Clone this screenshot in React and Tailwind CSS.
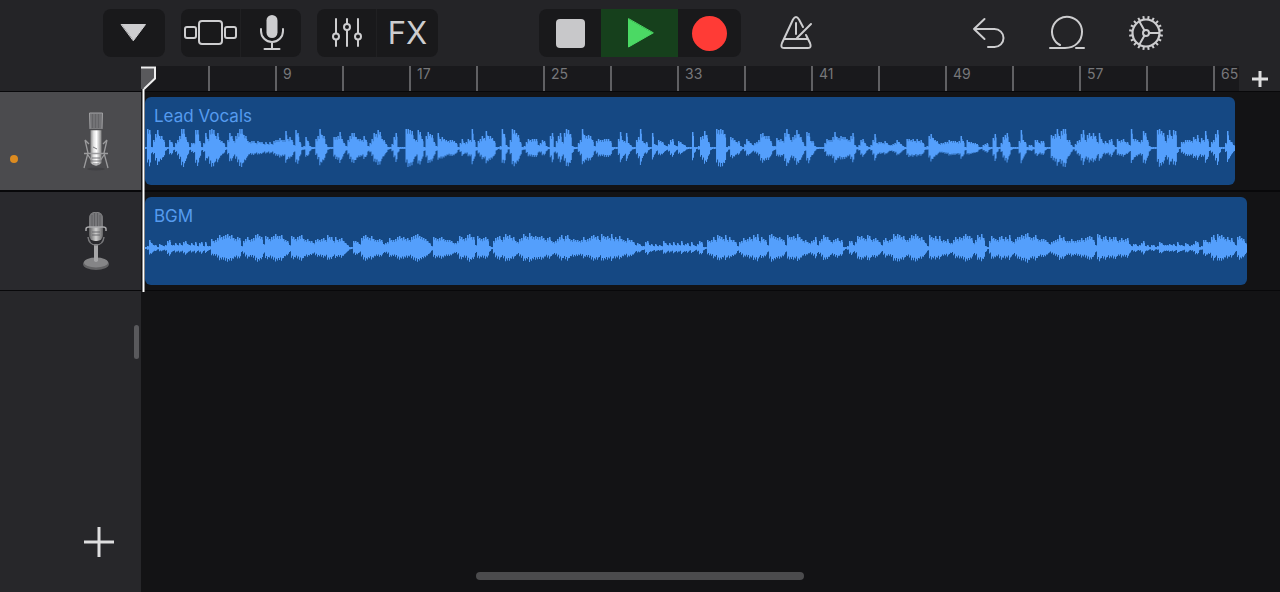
import { clsx } from "clsx";

const BAR_MARKS = ["", "", "9", "", "17", "", "25", "", "33", "", "41", "", "49", "", "57", "", "65"];

// one character per 2px of audio, base 36 amplitude
const LEAD_PEAKS = [
    "1ji18eicc81186158cjjb6155ii715f9ijicf87518fc7cfjjdc7",
    "677576646464788a88h9b83if612b7",
    "2119cjdc4111bbcg9528cffb998c82",
    "59feig984114bf1111jjih98ig91cg",
    "ed62f9b98788751595698j8179cahc",
    "ca7112je31",
    "8jifd612698999358721cf17cf6fji",
    "e21158jdcdc82798899971119g87f5",
    "3118bj75611f438763248932764311",
    "1g112bchd6111jijie12ba86721497",
    "53568efccc722a897fje8bdieb62gf",
    "77211115988bgbacbb98cf31389521",
    "38e56",
    "657533458642199897978512cea874",
    "5566877767c718665541134511ae11",
    "5bdf611117i86133188577111dcejc",
    "hjj8831478ei8dfcfc6f9575893197",
    "89663j99868hf82111ijhf7dicih11",
    "668887b9d6a8h9168ei1115h863",
].join("");

const BGM_PEAKS = [
    "12853314323783353536743536256262",
    "2978adbcdecda9ba279b89adecb4cb9bceccd9873cb9bcd9897758989a8dbb7b89a75311",
    "7764acdbac98898456a889bcab9a8bcdecba9752ba9ab98887557cb9adebb3ca9ab9217abc8becdab769aecbfcbcb",
    "bca8ab7679bd9cd9898878b89acdbc8ecbcae9b9c987a8863542267342423275353635373452632476118",
    "78b8dcb9d8b886267a89b9dbe7b983decbab983dbbcaeb9786578b379dbb8689a781127736cbca9dc89a8638a789ece",
    "dbc88adcecab852dbac9c7879558b9bacecca58dbea217ca98bc9b9d769bbdcefbabd98998646789dab7779778",
    "8a8abcb83ed9bc8b9bb78a89a424423572313312653334342633254234761288",
    "66bd8ecdb9b8a63bca95",
].join("");

const TRACKS = [
    { name: "Lead Vocals", length: 1090, peaks: LEAD_PEAKS, Icon: CondenserMic, selected: true },
    { name: "BGM", length: 1102, peaks: BGM_PEAKS, Icon: DeskMic, selected: false },
];

function wavePath(peaks) {
    return [...peaks]
        .map((c, i) => {
            const a = parseInt(c, 36);
            // the lower half runs a little behind the upper one, so the two edges differ
            const prev = parseInt(peaks[i - 1] ?? c, 36);
            const below = Math.max((a * 3 + prev) / 4, 0.5);
            const above = Math.max(a, 0.5);
            return `M${i * 2} ${20 - above}h1.5v${above * 0.25}h.5V${20 + below * 0.8}h-1V${20 + below}h-1z`;
        })
        .join("");
}

function Waveform({ peaks }) {
    return (
        <svg viewBox={`0 0 ${peaks.length * 2} 40`} preserveAspectRatio="none" className="block h-10 w-full fill-[#549ffc]" aria-hidden="true">
            <path d={wavePath(peaks)} />
        </svg>
    );
}

function CondenserMic() {
    return (
        <svg width="28" height="60" viewBox="0 0 28 60" aria-hidden="true">
            <defs>
                <linearGradient id="chrome">
                    <stop offset="0" stopColor="#8b8b8b" />
                    <stop offset=".3" stopColor="#e4e4e4" />
                    <stop offset=".55" stopColor="#fff" />
                    <stop offset="1" stopColor="#858585" />
                </linearGradient>
            </defs>
            <ellipse cx="14" cy="58" rx="9" ry="1.500" fill="#414144" />
            <path d="M7.500 2h13l-.5 16H8z" fill="#737376" stroke="#a0a0a2" />
            <path d="M10.500 3v14M13.500 3v14M16.500 3v14" stroke="#646467" />
            <path d="M8.500 18h11v34q-5.500 5-11 0z" fill="url(#chrome)" />
            <path d="M8 18.500h12" stroke="#4c4c4f" strokeWidth="1.5" />
            <path d="M3 29l3 13-4 15M25 29l-3 13 4 15M2 42.500h24M6 44l4 6M22 44l-4 6M3 29l4 4M25 29l-4 4" fill="none" stroke="#9c9c9e" strokeWidth="1.3" />
            <path d="M11 36l4 2M10 47h8M9 50h10M11 53h6" stroke="#77777a" />
        </svg>
    );
}

function DeskMic() {
    return (
        <svg width="28" height="60" viewBox="0 0 28 60" aria-hidden="true">
            <defs>
                <linearGradient id="steel">
                    <stop offset="0" stopColor="#5c5c5e" />
                    <stop offset=".5" stopColor="#cfcfcf" />
                    <stop offset="1" stopColor="#626264" />
                </linearGradient>
            </defs>
            <ellipse cx="14" cy="53" rx="13" ry="6" fill="#626264" />
            <ellipse cx="14" cy="51.500" rx="12" ry="5" fill="#858587" />
            <path d="M12 33h4v17q-2 2-4 0z" fill="#a5a5a7" />
            <path d="M6 26q1 8 8 8 7 0 8-8" fill="none" stroke="#78787b" strokeWidth="1.5" />
            <rect x="7" y="1" width="14" height="29" rx="6" fill="url(#steel)" />
            <path d="M7 16V8q0-7 7-7t7 7v8z" fill="#77777a" />
            <path d="M10 4v12M12.500 2v14M15.500 2v14M18 4v12" stroke="#606063" />
            <path d="M4 20v-2q0-2 3-2h14q3 0 3 2v2" fill="none" stroke="#a8a8aa" strokeWidth="1.5" />
            <path d="M10 21h8M10 24h8" stroke="#69696c" />
        </svg>
    );
}

function ToolButton({ label, className, children }) {
    return (
        <button aria-label={label} className={clsx("flex h-12 items-center justify-center", className)}>
            {children}
        </button>
    );
}

function Glyph({ children }) {
    return (
        <svg width="36" height="36" viewBox="0 0 36 36" fill="none" stroke="currentColor" strokeWidth="2" strokeLinecap="round" strokeLinejoin="round" aria-hidden="true">
            {children}
        </svg>
    );
}

function Gear() {
    return (
        <Glyph>
            <circle cx="18" cy="18" r="13.500" strokeWidth="2.2" />
            <circle cx="18" cy="18" r="3" />
            <path d="M21 18h10M16.500 15.400l-5-8.700M16.500 20.600l-5 8.700" />
            {Array.from({ length: 20 }).map((_, i) => (
                <path key={i} d="M18 4V1" transform={`rotate(${i * 18 + 9} 18 18)`} strokeLinecap="butt" />
            ))}
        </Glyph>
    );
}

function Toolbar() {
    return (
        <header className="grid h-[66px] shrink-0 grid-cols-[1fr_auto_1fr] items-center bg-[#242427] text-[#cdcdcf]">
            <div className="flex items-center gap-4 pl-[103px]">
                <div className="rounded-lg bg-[#19191b]">
                    <ToolButton label="Browser" className="w-[62px]">
                        <Glyph>
                            <path d="M5.500 9.500h24L17.500 25.500z" fill="currentColor" strokeWidth="1" />
                        </Glyph>
                    </ToolButton>
                </div>
                <div className="flex rounded-lg bg-[#19191b]">
                    <ToolButton label="Tracks view" className="w-[60px] border-r border-[#202022]">
                        <svg width="54" height="28" viewBox="0 0 54 28" fill="none" stroke="currentColor" strokeWidth="2" aria-hidden="true">
                            <rect x="15" y="2" width="23" height="23" rx="3" />
                            <rect x="1" y="8" width="11" height="11" rx="2" />
                            <rect x="41" y="8" width="11" height="11" rx="2" />
                        </svg>
                    </ToolButton>
                    <ToolButton label="Instrument" className="w-[60px]">
                        <Glyph>
                            <rect x="13.500" y="0" width="11" height="23" rx="5.500" fill="currentColor" stroke="none" />
                            <path d="M8 14v2a11 11 0 0 0 22 0v-2M19 27v6M11.500 34h15" />
                        </Glyph>
                    </ToolButton>
                </div>
                <div className="flex rounded-lg bg-[#19191b]">
                    <ToolButton label="Track controls" className="w-[60px] border-r border-[#202022]">
                        <Glyph>
                            <path d="M7 4v14M7 25v6M18 4v5M18 15v16M29 4v14M29 25v6" />
                            <circle cx="7" cy="21.500" r="3" />
                            <circle cx="18" cy="12" r="3" />
                            <circle cx="29" cy="21.500" r="3" />
                        </Glyph>
                    </ToolButton>
                    <ToolButton label="Effects" className="w-[61px] text-[31px]">FX</ToolButton>
                </div>
            </div>

            <div className="flex overflow-hidden rounded-lg bg-[#19191b]">
                <ToolButton label="Stop" className="w-[62px]">
                    <span className="size-[29px] rounded-sm bg-[#c8c8ca]" />
                </ToolButton>
                <ToolButton label="Play" className="w-[77px] bg-[#16401c] text-[#4bd964]">
                    <Glyph>
                        <path d="M6.500 4v28L31 18z" fill="currentColor" strokeWidth="1" />
                    </Glyph>
                </ToolButton>
                <ToolButton label="Record" className="w-[63px]">
                    <span className="size-[35px] rounded-full bg-[#ff3b36]" />
                </ToolButton>
            </div>

            <div className="flex items-center justify-between pl-9 pr-[116px]">
                <ToolButton label="Metronome" className="w-9">
                    <Glyph>
                        <path d="M26 12l-4-7.500q-3-5-6 0L5 28q-2 5 2 5h24q4 0 2-5l-4-8M7 24h23M19 8v11M20 23L34 9" />
                    </Glyph>
                </ToolButton>
                <div className="flex items-center gap-[43px]">
                    <ToolButton label="Undo" className="w-9">
                        <Glyph>
                            <path d="M14.500 4L4 14l10.500 10M4 14h20.500a9 9 0 0 1 0 18H18" />
                        </Glyph>
                    </ToolButton>
                    <ToolButton label="Loop browser" className="w-9">
                        <Glyph>
                            <path d="M1 33h15c10 0 17-7 17-16a15 15 0 1 0-22 13M27 33h8" />
                        </Glyph>
                    </ToolButton>
                    <ToolButton label="Settings" className="w-9">
                        <Gear />
                    </ToolButton>
                </div>
            </div>
        </header>
    );
}

function Ruler() {
    return (
        <div className="flex h-[25px] shrink-0 bg-[#242427]">
            <div className="w-[141px] shrink-0" />
            <div className="flex min-w-0 flex-1 overflow-hidden bg-[#19191c]">
                {BAR_MARKS.map((mark, i) => (
                    <div key={i} className={clsx("w-[67px] shrink-0 pl-1.5 text-sm leading-4 text-[#77777a]", i > 0 && "border-l-2 border-[#606063]")}>
                        {mark}
                    </div>
                ))}
            </div>
            <button aria-label="Add section" className="flex w-[41px] shrink-0 items-center justify-center bg-[#242427] text-[#dededf]">
                <svg width="16" height="16" viewBox="0 0 16 16" stroke="currentColor" strokeWidth="3" aria-hidden="true">
                    <path d="M8 0v16M0 8h16" />
                </svg>
            </button>
        </div>
    );
}

function Track({ name, length, peaks, Icon, selected }) {
    return (
        <div className="flex h-[100px] border-y border-[#08080a]">
            <button aria-label={`${name} track`} className={clsx("flex w-[141px] shrink-0 items-center justify-between pl-[10px] pr-[31px]", selected ? "bg-[#4b4b4e]" : "bg-[#29292d]")}>
                <span className={clsx("mt-9 size-2 rounded-full", selected && "bg-[#dc8b20]")} />
                <Icon />
            </button>
            <div className="min-w-0 flex-1 overflow-hidden pl-1 pt-[5px]">
                <div className="h-[88px] rounded-md bg-[#154883] pt-[7px]" style={{ width: length }}>
                    <div className="pl-[9px] text-[17px] leading-6 text-[#559bef]">{name}</div>
                    <Waveform peaks={peaks} />
                </div>
            </div>
        </div>
    );
}

function Playhead() {
    return (
        <svg width="17" height="226" viewBox="0 0 17 226" className="pointer-events-none absolute left-[140px] top-[66px]" aria-hidden="true">
            <path d="M1 1.500h14v11L4 23H1z" fill="#59595c" />
            <path d="M1 1.500h14v11L4 23" fill="none" stroke="#eee" strokeWidth="2" />
            <path d="M3.500 23v203" stroke="#fff" strokeWidth="2" />
        </svg>
    );
}

export default function App() {
    return (
        <div className="relative flex min-h-screen flex-col overflow-hidden bg-[#131315] font-['Inter',sans-serif]">
            <Toolbar />
            <Ruler />
            <main className="flex flex-1 flex-col">
                {TRACKS.map((track) => (
                    <Track key={track.name} {...track} />
                ))}
                <div className="flex flex-1">
                    <aside className="flex w-[141px] shrink-0 flex-col justify-between bg-[#27272a] pb-[34px]">
                        <div className="mr-[2px] mt-[34px] h-[34px] w-[5px] self-end rounded-full bg-[#59595c]" />
                        <button aria-label="Add track" className="ml-[83px] w-8 text-[#dededf]">
                            <svg width="32" height="32" viewBox="0 0 32 32" stroke="currentColor" strokeWidth="3" aria-hidden="true">
                                <path d="M16 1v30M1 16h30" />
                            </svg>
                        </button>
                    </aside>
                    <div className="flex-1" />
                </div>
            </main>
            <Playhead />
            <div className="absolute bottom-3 left-1/2 h-2 w-[328px] -translate-x-1/2 rounded-full bg-[#4b4b4d]" />
        </div>
    );
}
